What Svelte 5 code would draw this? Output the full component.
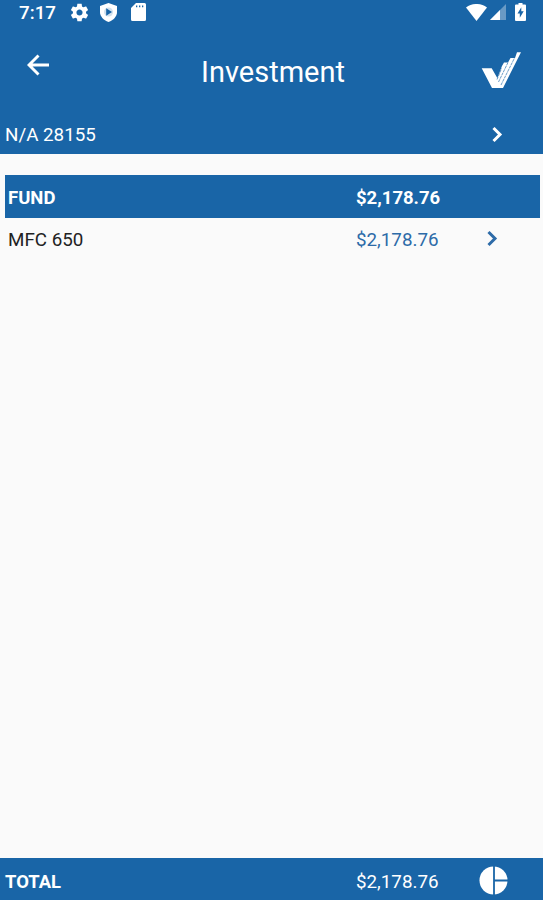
<script lang="ts">
	type Fund = { name: string; amount: string };

	const account = 'N/A 28155';
	const total = '$2,178.76';
	const funds: Fund[] = [{ name: 'MFC 650', amount: '$2,178.76' }];
</script>

{#snippet chevron()}
	<svg class="chevron" width="12" height="18" viewBox="0 0 12 18">
		<path d="M2.500 2l6.500 6.500-6.500 6.500" fill="none" stroke="currentColor" stroke-width="3" />
	</svg>
{/snippet}

<div class="screen">
	<div class="status-bar">
		<span class="clock">7:17</span>
		<svg class="gear" width="21" height="21" viewBox="0 0 24 24">
			<path
				d="M19.43 12.98c.04-.32.07-.64.07-.98s-.03-.66-.07-.98l2.11-1.65c.19-.15.24-.42.12-.64l-2-3.46c-.12-.22-.39-.3-.61-.22l-2.49 1c-.52-.4-1.08-.73-1.69-.98l-.38-2.65C14.46 2.18 14.25 2 14 2h-4c-.25 0-.46.18-.49.42l-.38 2.65c-.61.25-1.17.59-1.69.98l-2.49-1c-.23-.09-.49 0-.61.22l-2 3.46c-.13.22-.07.49.12.64l2.11 1.65c-.04.32-.07.65-.07.98s.03.66.07.98l-2.11 1.65c-.19.15-.24.42-.12.64l2 3.46c.12.22.39.3.61.22l2.49-1c.52.4 1.08.73 1.69.98l.38 2.65c.03.24.24.42.49.42h4c.25 0 .46-.18.49-.42l.38-2.65c.61-.25 1.17-.59 1.69-.98l2.49 1c.23.09.49 0 .61-.22l2-3.46c.12-.22.07-.49-.12-.64l-2.11-1.65zM12 15.500c-1.930 0-3.500-1.570-3.500-3.500s1.570-3.500 3.500-3.500 3.500 1.570 3.500 3.500-1.570 3.500-3.500 3.500z"
			/>
		</svg>
		<svg class="shield" width="17" height="19" viewBox="0 0 17 19">
			<path d="M8.500 0L17 3v6c0 4.500-3.400 8-8.500 10C3.400 17 0 13.500 0 9V3z" />
			<circle class="disc" cx="8.500" cy="9" r="4.500" />
			<path class="play" d="M6.200 5.300l5.800 3.700-5.800 3.700z" />
		</svg>
		<svg class="card" width="15" height="18" viewBox="0 0 15 18">
			<path
				fill-rule="evenodd"
				d="M5 0h8.500a1.500 1.500 0 0 1 1.500 1.500v15a1.500 1.500 0 0 1-1.500 1.500h-12A1.500 1.500 0 0 1 0 16.500V5zM5 2.500v1.800h1.300V2.500zM8 2.500v1.800h1.300V2.500zM11 2.500v1.800h1.300V2.500z"
			/>
		</svg>
		<div class="system">
			<svg width="21" height="17" viewBox="0 0 21 17">
				<path d="M0 3.500C6-1.200 15-1.200 21 3.500L10.500 17z" />
			</svg>
			<svg class="signal" width="16" height="16" viewBox="0 0 16 16">
				<path d="M16 0v16H0z" opacity="0.350" />
				<path d="M10 6v10H0z" />
			</svg>
			<svg class="battery" width="11" height="18" viewBox="0 0 11 18">
				<path
					fill-rule="evenodd"
					d="M3.500 0h4v1.600H10a1 1 0 0 1 1 1V17a1 1 0 0 1-1 1H1a1 1 0 0 1-1-1V2.600a1 1 0 0 1 1-1h2.500zM6.300 4.200L2.500 10.500h2.300v4.300l3.900-6.500H6.300z"
				/>
			</svg>
		</div>
	</div>

	<header class="app-bar">
		<svg class="back" width="22" height="22" viewBox="0 0 22 22">
			<path d="M22 11H2.500M11.500 1.500L2 11l9.500 9.500" fill="none" stroke="#fff" stroke-width="2.900" />
		</svg>
		<h1>Investment</h1>
		<svg class="logo" width="40" height="38" viewBox="0 0 40 38">
			<path d="M.7 17.300h10L16.300 27l4.700-12 2-3.500h4l2.500-4.500h4.500l2-5.700h4L22 37H11z" />
			<path class="fingers" d="M17.500 31L27 11.500M20 34L33.500 7M16 28.500l4.500-11" />
		</svg>
	</header>

	<div class="account">
		<span>{account}</span>
		{@render chevron()}
	</div>

	<main>
		<div class="row head">
			<span>FUND</span>
			<span>{total}</span>
		</div>
		{#each funds as fund (fund.name)}
			<div class="row">
				<span>{fund.name}</span>
				<span class="amount">{fund.amount}</span>
				{@render chevron()}
			</div>
		{/each}
	</main>

	<footer>
		<strong>TOTAL</strong>
		<span>{total}</span>
		<svg class="pie" width="29" height="29" viewBox="0 0 29 29">
			<circle cx="14.500" cy="14.500" r="14" />
			<path d="M15 0v29M15 14.500H29" stroke="#1965a7" stroke-width="1.800" />
		</svg>
	</footer>
</div>

<style>
	:global(body) {
		margin: 0;
	}

	.screen {
		display: flex;
		flex-direction: column;
		height: 900px;
		background: #fafafa;
		color: #fff;
		font-family: Roboto, sans-serif;
		font-size: 18.8px;
		line-height: 22px;
	}

	svg {
		display: block;
		flex: none;
		fill: #fff;
	}

	.status-bar {
		display: flex;
		align-items: center;
		height: 24px;
		padding: 0 17px 0 19px;
		background: #1965a7;
	}

	.clock {
		width: 50px;
		padding-top: 2px;
		font-weight: 500;
	}

	.shield {
		margin-left: 10px;
	}

	.disc {
		fill: #1965a7;
		opacity: 0.2;
	}

	.play {
		fill: #1965a7;
	}

	.card {
		margin-left: 14px;
	}

	.system {
		display: flex;
		align-items: center;
		margin-left: auto;
	}

	.signal {
		margin-left: 3px;
	}

	.battery {
		margin-left: 9px;
	}

	.app-bar {
		display: grid;
		grid-template-columns: 82px 1fr 79px;
		height: 91px;
		background: #1965a7;
	}

	.back {
		margin: 30px 0 0 27px;
	}

	h1 {
		margin: 31px 0 0;
		font-size: 29px;
		font-weight: 400;
		line-height: 34px;
		text-align: center;
	}

	.logo {
		margin: 27px 0 0 17px;
	}

	.fingers {
		fill: none;
		stroke: #1965a7;
		stroke-width: 0.8;
		stroke-dasharray: 3 0.7;
		opacity: 0.8;
	}

	.account {
		display: flex;
		align-items: center;
		justify-content: space-between;
		height: 39px;
		padding: 0 40px 0 5px;
		background: #1965a7;
	}

	main {
		flex: 1;
		padding: 21px 3px 0 5px;
	}

	.row {
		display: grid;
		grid-template-columns: 348px 130px 1fr;
		align-items: center;
		height: 42px;
		padding-left: 3px;
		color: #222;
	}

	.row span {
		padding-top: 2px;
	}

	.head {
		height: 43px;
		background: #1965a7;
		color: #fff;
		font-size: 18.5px;
		font-weight: 700;
	}

	.amount,
	.row .chevron {
		color: #2d6ba8;
	}

	footer {
		display: grid;
		grid-template-columns: 351px 123px 1fr;
		align-items: center;
		height: 42px;
		padding: 3px 0 0 5px;
		box-sizing: border-box;
		background: #1965a7;
	}

	footer span,
	footer strong {
		padding-top: 2px;
	}

	strong {
		font-size: 18.4px;
	}
</style>
